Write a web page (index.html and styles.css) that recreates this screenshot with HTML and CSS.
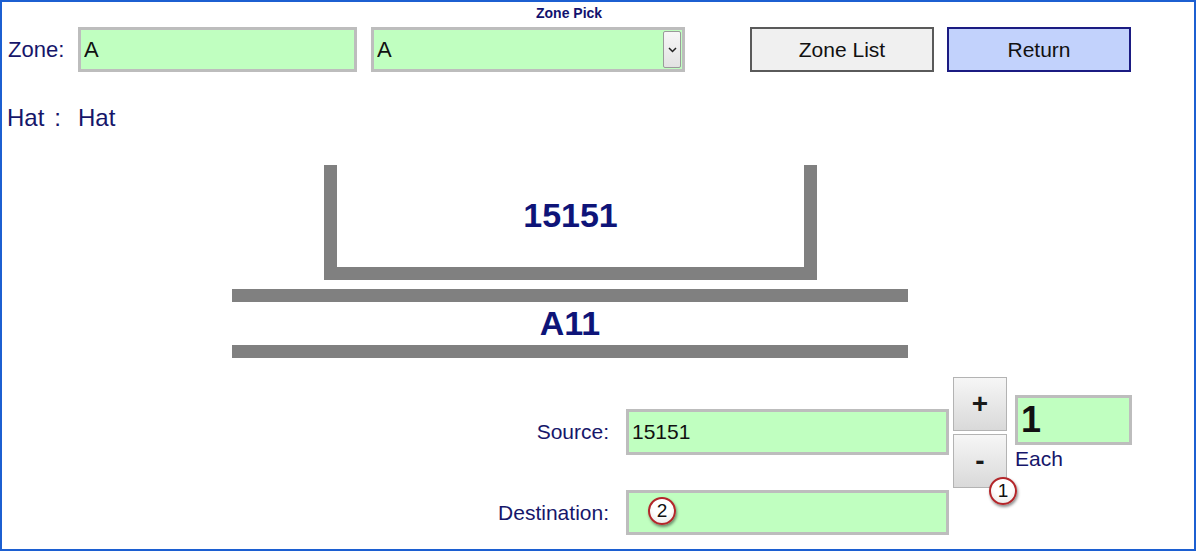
FILE: index.html
```html
<!DOCTYPE html>
<html lang="en">
<head>
    <meta charset="UTF-8">
    <title>Zone Pick</title>
    <link rel="stylesheet" href="styles.css">
</head>
<body>
    <div class="frame">
        <!-- Header -->
        <div class="title">Zone Pick</div>

        <div class="zone-row">
            <label class="zone-label">Zone:</label>
            <input class="field zone-input" type="text" value="A" readonly>
            <div class="select-box">
                <select class="zone-select">
                    <option>A</option>
                </select>
                <span class="select-arrow">
                    <svg width="9" height="6" viewBox="0 0 9 6"><path d="M1 1 L4.5 4.5 L8 1" fill="none" stroke="#222" stroke-width="1.5"/></svg>
                </span>
            </div>
            <button class="btn btn-list">Zone List</button>
            <button class="btn btn-return">Return</button>
        </div>

        <div class="hat-row">
            <span>Hat</span><span class="hat-sep">:</span><span>Hat</span>
        </div>

        <!-- Bin / location diagram -->
        <div class="diagram">
            <div class="bin">15151</div>
            <div class="bar"></div>
            <div class="location">A11</div>
            <div class="bar"></div>
        </div>

        <!-- Move form -->
        <div class="move">
            <div class="move-fields">
                <label class="move-label">Source:</label>
                <input class="field move-input" type="text" value="15151" readonly>
                <label class="move-label">Destination:</label>
                <div class="field-wrap">
                    <input class="field move-input" type="text" value="" readonly>
                    <span class="badge badge-dest">2</span>
                </div>
            </div>
            <div class="stepper">
                <button class="step">+</button>
                <button class="step">-</button>
                <span class="badge badge-step">1</span>
            </div>
            <div class="qty">
                <input class="field qty-input" type="text" value="1" readonly>
                <div class="qty-unit">Each</div>
            </div>
        </div>
    </div>
</body>
</html>
```

FILE: styles.css
```css
* {
    margin: 0;
    padding: 0;
    box-sizing: border-box;
}

body {
    font-family: 'Liberation Sans', Arial, sans-serif;
    background-color: #ffffff;
    color: #16166a;
}

.frame {
    width: 1196px;
    height: 551px;
    border: 2px solid #1c5fd1;
    overflow: hidden;
}

/* Header */
.title {
    height: 25px;
    padding: 3px 0 0 534px;
    font-size: 14px;
    font-weight: 700;
    line-height: 17px;
    color: #12126e;
}

.zone-row {
    display: flex;
    align-items: center;
    height: 45px;
}

.zone-label {
    width: 70px;
    margin-left: 6px;
    font-size: 22px;
}

.field {
    font-family: 'Liberation Sans', Arial, sans-serif;
    background-color: #c0ffc0;
    border: 3px solid #bdbdbd;
    outline: none;
    color: #111111;
    padding: 0 3px;
}

.zone-input {
    width: 279px;
    height: 45px;
    font-size: 22px;
}

.select-box {
    display: flex;
    align-items: center;
    width: 314px;
    height: 45px;
    margin-left: 14px;
    background-color: #c0ffc0;
    border: 3px solid #bdbdbd;
    padding-right: 1px;
}

.zone-select {
    appearance: none;
    -webkit-appearance: none;
    flex: 1;
    height: 100%;
    border: none;
    background: transparent;
    font-family: 'Liberation Sans', Arial, sans-serif;
    font-size: 22px;
    color: #111111;
    padding-left: 3px;
    outline: none;
}

.select-arrow {
    display: flex;
    align-items: center;
    justify-content: center;
    width: 18px;
    height: 37px;
    background: linear-gradient(#f7f7f7, #e2e2e2);
    border: 1px solid #9a9a9a;
    border-radius: 2px;
}

.btn {
    width: 184px;
    height: 45px;
    font-family: 'Liberation Sans', Arial, sans-serif;
    font-size: 21px;
    color: #111111;
}

.btn-list {
    margin-left: 65px;
    background-color: #f0f0f0;
    border: 2px solid #5a5a5a;
}

.btn-return {
    margin-left: 13px;
    background-color: #c2d2fc;
    border: 2px solid #1b1b82;
}

.hat-row {
    margin-top: 32px;
    margin-left: 5px;
    font-size: 24px;
    line-height: 28px;
}

.hat-sep {
    margin: 0 17px 0 10px;
}

/* Diagram */
.diagram {
    width: 676px;
    margin: 33px 0 0 230px;
    color: #0e1478;
    font-weight: 700;
    text-align: center;
}

.bin {
    width: 493px;
    height: 115px;
    margin-left: 92px;
    border: 13px solid #808080;
    border-top: none;
    padding-top: 30px;
    font-size: 34px;
    line-height: 40px;
}

.bar {
    height: 13px;
    background-color: #808080;
}

.diagram .bin + .bar {
    margin-top: 9px;
}

.location {
    font-size: 34px;
    line-height: 43px;
}

/* Move form */
.move {
    display: flex;
    align-items: flex-start;
}

.move-fields {
    display: grid;
    grid-template-columns: 607px 323px;
    grid-template-rows: 46px 45px;
    column-gap: 17px;
    row-gap: 35px;
    align-items: center;
    margin-top: 51px;
}

.move-label {
    text-align: right;
    font-size: 21px;
}

.move-input {
    width: 323px;
    height: 100%;
    font-size: 21px;
}

.field-wrap {
    position: relative;
    height: 100%;
}

.stepper {
    position: relative;
    display: flex;
    flex-direction: column;
    gap: 3px;
    margin: 19px 0 0 4px;
}

.step {
    width: 54px;
    height: 54px;
    background: linear-gradient(#f6f6f6, #d9d9d9);
    border: 1px solid #b3b3b3;
    font-family: 'Liberation Sans', Arial, sans-serif;
    font-size: 28px;
    font-weight: 700;
    color: #1a1a1a;
}

.qty {
    margin: 37px 0 0 8px;
}

.qty-input {
    width: 117px;
    height: 50px;
    font-size: 36px;
    font-weight: 700;
}

.qty-unit {
    margin-top: 2px;
    font-size: 21px;
    line-height: 24px;
}

.badge {
    position: absolute;
    display: flex;
    align-items: center;
    justify-content: center;
    width: 28px;
    height: 28px;
    border-radius: 50%;
    border: 2px solid #b3262a;
    background: radial-gradient(circle at 50% 35%, #ffffff 45%, #e2e2e2 100%);
    box-shadow: 1px 2px 3px rgba(0, 0, 0, 0.45);
    font-size: 19px;
    color: #111111;
}

.badge-dest {
    left: 22px;
    top: 7px;
}

.badge-step {
    left: 36px;
    top: 100px;
}
```
